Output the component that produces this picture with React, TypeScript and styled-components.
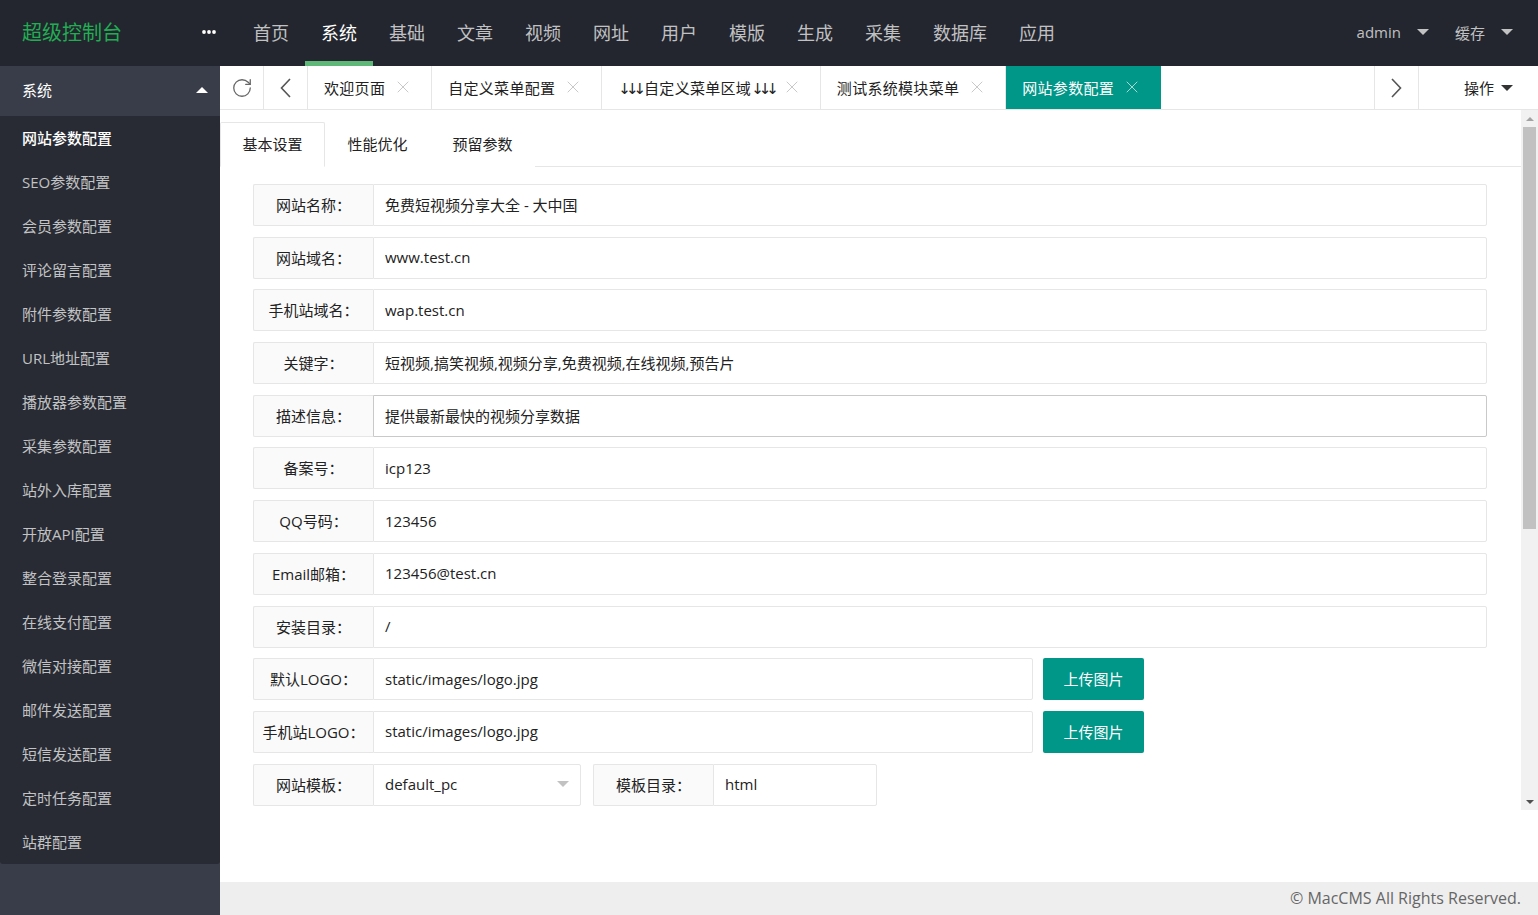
import styled, { createGlobalStyle } from "styled-components";
import { RotateCw, X } from "lucide-react";

const GlobalStyle = createGlobalStyle`
  html, body {
    margin: 0;
    padding: 0;
    height: 100%;
    overflow: hidden;
  }
  body {
    font-family: "Open Sans", "Noto Sans CJK SC", sans-serif;
    color: #333;
  }
  * { box-sizing: border-box; }
`;

const NavList = ["首页", "系统", "基础", "文章", "视频", "网址", "用户", "模版", "生成", "采集", "数据库", "应用"];

const SideList = [
  "网站参数配置", "SEO参数配置", "会员参数配置", "评论留言配置", "附件参数配置", "URL地址配置",
  "播放器参数配置", "采集参数配置", "站外入库配置", "开放API配置", "整合登录配置", "在线支付配置",
  "微信对接配置", "邮件发送配置", "短信发送配置", "定时任务配置", "站群配置",
];

const TabList = [
  { title: "欢迎页面" },
  { title: "自定义菜单配置" },
  { title: "自定义菜单区域", arrows: true },
  { title: "测试系统模块菜单" },
  { title: "网站参数配置", active: true },
];

const Fields = [
  { label: "网站名称：", value: "免费短视频分享大全 - 大中国" },
  { label: "网站域名：", value: "www.test.cn" },
  { label: "手机站域名：", value: "wap.test.cn" },
  { label: "关键字：", value: "短视频,搞笑视频,视频分享,免费视频,在线视频,预告片" },
  { label: "描述信息：", value: "提供最新最快的视频分享数据", focus: true },
  { label: "备案号：", value: "icp123" },
  { label: "QQ号码：", value: "123456" },
  { label: "Email邮箱：", value: "123456@test.cn" },
  { label: "安装目录：", value: "/" },
  { label: "默认LOGO：", value: "static/images/logo.jpg", upload: true },
  { label: "手机站LOGO：", value: "static/images/logo.jpg", upload: true },
];

const Chevron = ({ dir }: { dir: "left" | "right" }) => (
  <svg width="11" height="20" viewBox="0 0 11 20" fill="none" stroke="#555" strokeWidth="1.6">
    {dir === "left" ? <polyline points="10,1 1.5,10 10,19" /> : <polyline points="1,1 9.5,10 1,19" />}
  </svg>
);

const MoreIcon = () => (
  <svg width="14" height="4" viewBox="0 0 14 4" fill="#fff">
    <circle cx="2" cy="2" r="1.9" />
    <circle cx="7" cy="2" r="1.9" />
    <circle cx="12" cy="2" r="1.9" />
  </svg>
);

export default function App() {
  return (
    <>
      <GlobalStyle />
      <Layout>
        <Header>
          <Logo>
            <span>超级控制台</span>
            <MoreIcon />
          </Logo>
          <Nav>
            {NavList.map((n) => (
              <NavItem key={n} $active={n === "系统"}>{n}</NavItem>
            ))}
          </Nav>
          <HeadRight>
            <HeadDrop>admin<Caret $color="#c2c2c2" /></HeadDrop>
            <HeadDrop>缓存<Caret $color="#c2c2c2" /></HeadDrop>
          </HeadRight>
        </Header>

        <Side>
          <SideHead>
            系统
            <CaretUp />
          </SideHead>
          <SubMenu>
            {SideList.map((s, i) => (
              <SubItem key={s} $active={i === 0}>{s}</SubItem>
            ))}
          </SubMenu>
        </Side>

        <Main>
          <TabBar>
            <IconCell><RotateCw size={22} strokeWidth={1.4} color="#666" /></IconCell>
            <IconCell><Chevron dir="left" /></IconCell>
            {TabList.map((t) => (
              <PageTab key={t.title} $active={!!t.active}>
                <span>
                  {t.arrows && <Arrows>↓↓↓</Arrows>}
                  {t.title}
                  {t.arrows && <Arrows>↓↓↓</Arrows>}
                </span>
                <X size={20} strokeWidth={1.1} color={t.active ? "#b8ded9" : "#c4c4c4"} />
              </PageTab>
            ))}
            <Spacer />
            <IconCell $left><Chevron dir="right" /></IconCell>
            <OpCell>操作<Caret $color="#333" /></OpCell>
          </TabBar>

          <Body>
            <FrameRow>
              <Page>
                <FormTabs>
                  <FormTab $active>基本设置</FormTab>
                  <FormTab>性能优化</FormTab>
                  <FormTab>预留参数</FormTab>
                </FormTabs>
                <Form>
                  {Fields.map((f) => (
                    <Row key={f.label} $gap={10}>
                      <Group $width={f.upload ? 780 : undefined}>
                        <Label>{f.label}</Label>
                        <Input $focus={!!f.focus} readOnly value={f.value} />
                      </Group>
                      {f.upload && <UploadBtn>上传图片</UploadBtn>}
                    </Row>
                  ))}
                  <Row $gap={12}>
                    <Group $width={328}>
                      <Label>网站模板：</Label>
                      <SelectBox>
                        default_pc
                        <Caret $color="#c2c2c2" />
                      </SelectBox>
                    </Group>
                    <Group $width={284}>
                      <Label>模板目录：</Label>
                      <Input readOnly value="html" />
                    </Group>
                  </Row>
                </Form>
              </Page>
              <ScrollTrack>
                <ArrowUp />
                <Thumb />
                <TrackFill />
                <ArrowDown />
              </ScrollTrack>
            </FrameRow>
          </Body>

          <Footer>© MacCMS All Rights Reserved.</Footer>
        </Main>
      </Layout>
    </>
  );
}

const Layout = styled.div`
  display: grid;
  grid-template-columns: 220px 1fr;
  grid-template-rows: 66px 1fr;
  width: 100vw;
  height: 100vh;
`;

const Header = styled.header`
  grid-column: 1 / -1;
  display: flex;
  align-items: stretch;
  background: #23262e;
  height: 66px;
`;

const Logo = styled.div`
  width: 220px;
  display: flex;
  align-items: center;
  justify-content: space-between;
  padding: 0 4px 3px 22px;
  color: #22ad54;
  font-size: 20px;
`;

const Nav = styled.nav`
  display: flex;
  margin-left: 17px;
`;

const NavItem = styled.div<{ $active?: boolean }>`
  display: flex;
  align-items: center;
  padding: 3px 16px 0;
  font-size: 18px;
  color: ${({ $active }) => ($active ? "#fff" : "rgba(255,255,255,.72)")};
  border-bottom: 5px solid ${({ $active }) => ($active ? "#5fb878" : "transparent")};
`;

const HeadRight = styled.div`
  margin-left: auto;
  display: flex;
  align-items: center;
  gap: 26px;
  padding: 0 25px 2px 0;
`;

const HeadDrop = styled.div`
  display: flex;
  align-items: center;
  gap: 16px;
  color: rgba(255, 255, 255, 0.72);
  font-size: 15px;
`;

const Caret = styled.i<{ $color: string }>`
  display: inline-block;
  width: 0;
  height: 0;
  border-left: 6px solid transparent;
  border-right: 6px solid transparent;
  border-top: 6px solid ${({ $color }) => $color};
`;

const CaretUp = styled.i`
  display: inline-block;
  width: 0;
  height: 0;
  border-left: 6px solid transparent;
  border-right: 6px solid transparent;
  border-bottom: 6px solid #fff;
`;

const Side = styled.aside`
  background: #393d49;
  display: flex;
  flex-direction: column;
`;

const SideHead = styled.div`
  height: 50px;
  display: flex;
  align-items: center;
  justify-content: space-between;
  padding: 0 12px 3px 22px;
  color: #fff;
  font-size: 15px;
`;

const SubMenu = styled.div`
  background: #282b33;
  border-radius: 0 0 3px 3px;
`;

const SubItem = styled.div<{ $active?: boolean }>`
  height: 44px;
  display: flex;
  align-items: center;
  padding: 0 0 2px 22px;
  font-size: 15px;
  color: ${({ $active }) => ($active ? "#fff" : "rgba(255,255,255,.72)")};
  font-weight: ${({ $active }) => ($active ? 500 : 400)};
`;

const Main = styled.main`
  display: flex;
  flex-direction: column;
  min-width: 0;
  background: #fff;
`;

const TabBar = styled.div`
  height: 44px;
  display: flex;
  border-bottom: 1px solid #e6e6e6;
  flex-shrink: 0;
`;

const IconCell = styled.div<{ $left?: boolean }>`
  width: 44px;
  display: flex;
  align-items: center;
  justify-content: center;
  border-right: ${({ $left }) => ($left ? "none" : "1px solid #e6e6e6")};
  border-left: ${({ $left }) => ($left ? "1px solid #e6e6e6" : "none")};
`;

const PageTab = styled.div<{ $active?: boolean }>`
  display: flex;
  align-items: center;
  gap: 8px;
  padding: 0 18px 1px 16px;
  font-size: 15px;
  white-space: nowrap;
  letter-spacing: 0.3px;
  color: ${({ $active }) => ($active ? "#fff" : "#222")};
  background: ${({ $active }) => ($active ? "#009688" : "#fff")};
  border-right: 1px solid ${({ $active }) => ($active ? "#009688" : "#e6e6e6")};
`;

const Arrows = styled.span`
  font-family: "DejaVu Sans", sans-serif;
  font-size: 15px;
  letter-spacing: -5px;
  &:first-child {
    margin-right: 3px;
  }
`;

const Spacer = styled.div`
  flex: 1;
`;

const OpCell = styled.div`
  width: 120px;
  display: flex;
  align-items: center;
  justify-content: flex-end;
  gap: 7px;
  padding-right: 25px;
  font-size: 15px;
  color: #222;
  border-left: 1px solid #e6e6e6;
`;

const Body = styled.div`
  flex: 1;
  display: flex;
  flex-direction: column;
  min-height: 0;
`;

const FrameRow = styled.div`
  height: 700px;
  display: flex;
`;

const Page = styled.div`
  flex: 1;
  padding-top: 12px;
  overflow: hidden;
`;

const FormTabs = styled.div`
  display: flex;
  height: 45px;
  border-bottom: 1px solid #e6e6e6;
`;

const FormTab = styled.div<{ $active?: boolean }>`
  width: 105px;
  display: flex;
  align-items: center;
  justify-content: center;
  padding-bottom: 2px;
  font-size: 15px;
  color: #222;
  margin-bottom: -1px;
  border: 1px solid ${({ $active }) => ($active ? "#e6e6e6" : "transparent")};
  border-bottom-color: ${({ $active }) => ($active ? "#fff" : "transparent")};
  border-radius: 2px 2px 0 0;
  background: #fff;
`;

const Form = styled.div`
  padding: 17px 34px 0 33px;
  display: flex;
  flex-direction: column;
  gap: 10.7px;
`;

const Row = styled.div<{ $gap: number }>`
  display: flex;
  gap: ${({ $gap }) => $gap}px;
  height: 42px;
`;

const Group = styled.div<{ $width?: number }>`
  display: flex;
  flex: ${({ $width }) => ($width ? "none" : 1)};
  width: ${({ $width }) => ($width ? `${$width}px` : "auto")};
`;

const Label = styled.div`
  width: 120px;
  flex-shrink: 0;
  display: flex;
  align-items: center;
  justify-content: center;
  padding-bottom: 1px;
  background: #fafafa;
  border: 1px solid #e6e6e6;
  border-right: none;
  border-radius: 2px 0 0 2px;
  font-size: 15px;
  color: #222;
  white-space: nowrap;
`;

const Input = styled.input<{ $focus?: boolean }>`
  flex: 1;
  min-width: 0;
  height: 42px;
  border: 1px solid ${({ $focus }) => ($focus ? "#c9c9c9" : "#e6e6e6")};
  border-radius: 0 2px 2px 0;
  padding: 0 11px 1px;
  font: 15px "Open Sans", "Noto Sans CJK SC", sans-serif;
  color: #222;
  outline: none;
  background: #fff;
`;

const SelectBox = styled.div`
  flex: 1;
  display: flex;
  align-items: center;
  justify-content: space-between;
  border: 1px solid #e6e6e6;
  border-radius: 0 2px 2px 0;
  padding: 0 11px 1px;
  font-size: 15px;
  color: #222;
`;

const UploadBtn = styled.button`
  width: 101px;
  flex-shrink: 0;
  border: none;
  border-radius: 2px;
  background: #009688;
  color: #fff;
  padding-bottom: 2px;
  font: 15px "Open Sans", "Noto Sans CJK SC", sans-serif;
`;

const ScrollTrack = styled.div`
  width: 17px;
  background: #f1f1f1;
  display: flex;
  flex-direction: column;
  align-items: center;
`;

const ArrowUp = styled.i`
  margin-top: 7px;
  width: 0;
  height: 0;
  border-left: 4px solid transparent;
  border-right: 4px solid transparent;
  border-bottom: 4px solid #a3a3a3;
`;

const Thumb = styled.div`
  margin-top: 6px;
  width: 13px;
  height: 402px;
  background: #c1c1c1;
`;

const TrackFill = styled.div`
  flex: 1;
`;

const ArrowDown = styled.i`
  margin-bottom: 6px;
  width: 0;
  height: 0;
  border-left: 4px solid transparent;
  border-right: 4px solid transparent;
  border-top: 4px solid #505050;
`;

const Footer = styled.footer`
  height: 33px;
  flex-shrink: 0;
  background: #eee;
  display: flex;
  align-items: center;
  justify-content: flex-end;
  padding: 0 17px 1px 0;
  font-size: 16px;
  color: #666;
`;
